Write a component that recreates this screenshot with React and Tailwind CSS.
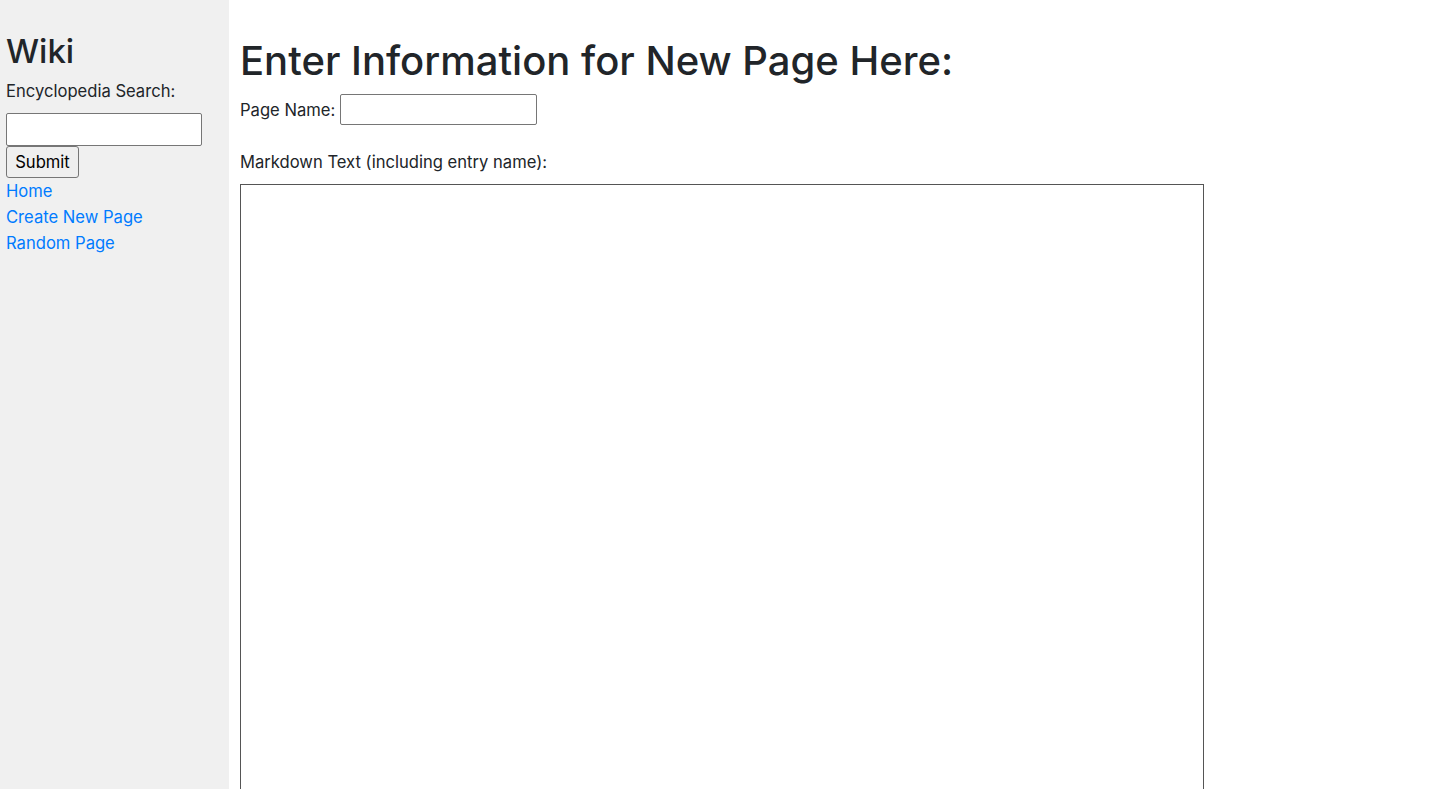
export default function App() {
  const font = { fontFamily: 'Inter, "Noto Sans", sans-serif' };
  return (
    <div className="flex h-screen overflow-hidden bg-white text-[#212529]" style={font}>
      <aside className="w-[229px] shrink-0 bg-[#f0f0f0] px-[6px] pt-[31px]">
        <h2 className="text-[33px] leading-[40px] font-medium mb-[8px]">Wiki</h2>
        <div className="text-[16.6px] leading-[24px]">Encyclopedia Search:</div>
        <form className="mt-[10px] flex flex-col items-start">
          <input
            type="text"
            className="h-[33px] w-[196px] bg-white border border-[#767676] rounded-[2px] px-1 text-[16px] text-black outline-none"
          />
          <button
            type="button"
            className="h-[32px] w-[73px] bg-[#efefef] border border-[#767676] rounded-[3px] text-[16.6px] text-black leading-none"
          >
            Submit
          </button>
        </form>
        <nav className="flex flex-col text-[16.6px] leading-[26px] text-[#007bff]">
          <a href="#" className="block">Home</a>
          <a href="#" className="block">Create New Page</a>
          <a href="#" className="block">Random Page</a>
        </nav>
      </aside>
      <main className="flex-1 pl-[11px] pt-[37px]">
        <h1 className="text-[40px] leading-[48px] font-medium mb-[9px]">
          Enter Information for New Page Here:
        </h1>
        <div className="flex items-center gap-[5px] text-[16.6px] leading-[24px]">
          <span>Page Name:</span>
          <input
            type="text"
            className="h-[31px] w-[197px] bg-white border border-[#767676] rounded-[2px] px-1 text-[16px] outline-none"
          />
        </div>
        <div className="mt-[25px] text-[16.6px] leading-[24px]">Markdown Text (including entry name):</div>
        <textarea className="mt-[10px] block w-[964px] h-[700px] border border-[#555555] resize-none outline-none" />
      </main>
    </div>
  );
}
